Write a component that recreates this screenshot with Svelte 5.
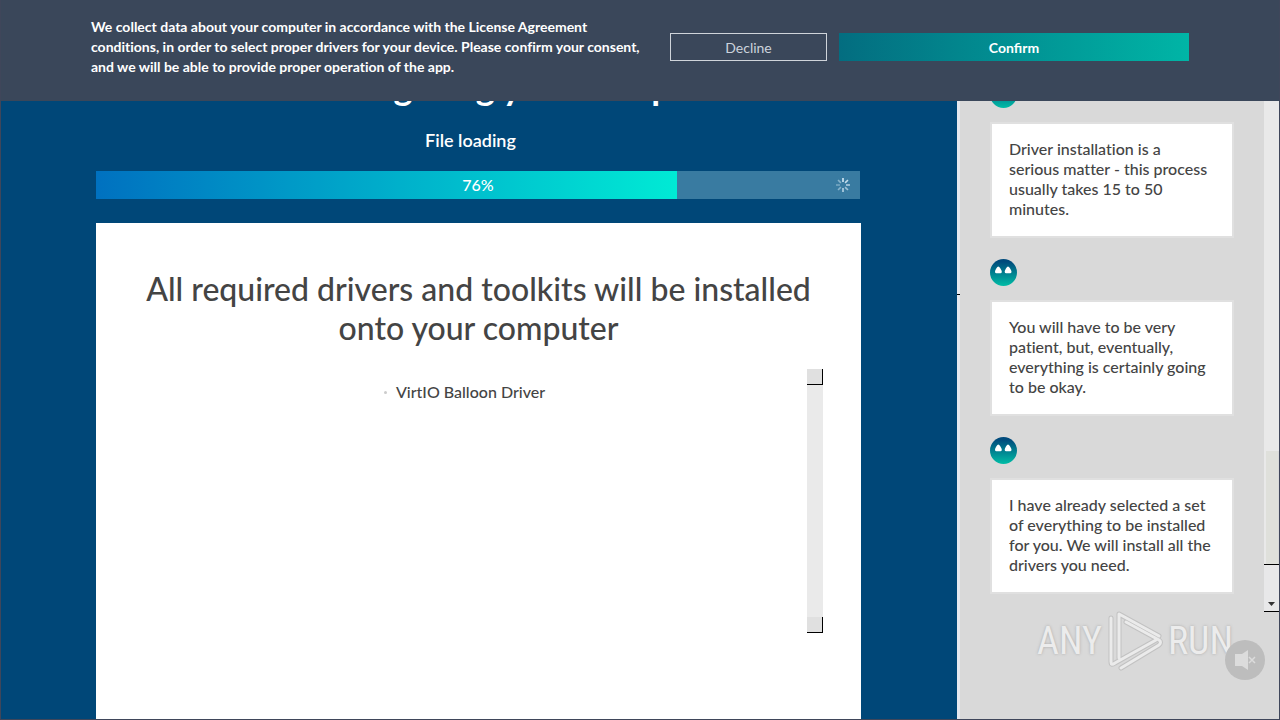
<script lang="ts">
    let drivers = ['VirtIO Balloon Driver'];
    let progress = 76;

    const spokes = [
        { angle: 0, opacity: 1 },
        { angle: 45, opacity: 0.9 },
        { angle: 90, opacity: 0.75 },
        { angle: 135, opacity: 0.65 },
        { angle: 180, opacity: 0.8 },
        { angle: 225, opacity: 0.5 },
        { angle: 270, opacity: 0.4 },
        { angle: 315, opacity: 0.5 }
    ];

    const messages = [
        ['Driver installation is a', 'serious matter - this process', 'usually takes 15 to 50', 'minutes.'],
        ['You will have to be very', 'patient, but, eventually,', 'everything is certainly going', 'to be okay.'],
        ['I have already selected a set', 'of everything to be installed', 'for you. We will install all the', 'drivers you need.']
    ];

    function handleConsent(accepted: boolean) {
        console.log('consent', accepted);
    }
</script>

<div class="window">
    <main>
        <h1>We are configuring your computer</h1>
        <p class="stage" id="stage">File loading</p>
        <div class="progress" role="progressbar" aria-labelledby="stage" aria-valuenow={progress}>
            <div class="bar" style="width: {progress}%"></div>
            <span class="percent">{progress}%</span>
            <svg class="spinner" viewBox="-8 -8 16 16" aria-hidden="true">
                {#each spokes as spoke}
                    <path d="M0 -3V-7" stroke="#d5e9f5" stroke-width="1.6" opacity={spoke.opacity} transform="rotate({spoke.angle})" />
                {/each}
            </svg>
        </div>
        <section class="card">
            <h2>All required drivers and toolkits will be installed<br />onto your computer</h2>
            <div class="drivers">
                <ul>
                    {#each drivers as driver}
                        <li>{driver}</li>
                    {/each}
                </ul>
                <div class="list-scroll">
                    <button type="button" aria-label="Scroll list up"></button>
                    <button type="button" aria-label="Scroll list down"></button>
                </div>
            </div>
        </section>
    </main>

    <aside>
        {#each messages as message}
            <div class="message">
                <svg class="avatar" viewBox="0 0 27 27" aria-hidden="true">
                    <defs>
                        <linearGradient id="face" x1="0" y1="0" x2="0" y2="1">
                            <stop offset="0.1" stop-color="#004b7c" />
                            <stop offset="1" stop-color="#00bda6" />
                        </linearGradient>
                    </defs>
                    <circle cx="13.5" cy="13.5" r="13.5" fill="url(#face)" />
                    <path d="M5 13C5 11 7.300 7.500 8.300 7.500S11.800 11 11.800 13q-.2 1.200-1.400 1.200H6.400Q5.200 14.200 5 13zM14.700 13c0-2 2.300-5.500 3.300-5.500s3.500 3.500 3.500 5.500q-.2 1.200-1.400 1.200h-4q-1.200 0-1.400-1.200z" fill="#fff" />
                </svg>
                <p>{#each message as line}{line}<br />{/each}</p>
            </div>
        {/each}
    </aside>

    <div class="page-scroll">
        <div class="track"></div>
        <div class="thumb"></div>
        <button type="button" aria-label="Scroll down">
            <svg viewBox="0 0 7 4" aria-hidden="true"><path d="M0 0h7L3.500 4z" fill="#333" /></svg>
        </button>
    </div>

    <div class="consent">
        <p>
            We collect data about your computer in accordance with the License Agreement<br />
            conditions, in order to select proper drivers for your device. Please confirm your consent,<br />
            and we will be able to provide proper operation of the app.
        </p>
        <button type="button" class="decline" on:click={() => handleConsent(false)}>Decline</button>
        <button type="button" class="confirm" on:click={() => handleConsent(true)}>Confirm</button>
    </div>

    <div class="watermark">
        <span>ANY</span>
        <svg viewBox="0 0 58 62" aria-hidden="true">
            <g fill="none" stroke-linecap="round" stroke-linejoin="round">
                <path class="edge" d="M5 8v44q0 4 4 1L50 30M13 48V4l40 22M15 58l38-23q3-3 0-5L20 12" />
                <path class="line" d="M5 8v44q0 4 4 1L50 30M13 48V4l40 22M15 58l38-23q3-3 0-5L20 12" />
            </g>
        </svg>
        <span>RUN</span>
    </div>

    <button type="button" class="mute" aria-label="Unmute">
        <svg viewBox="0 0 40 40" aria-hidden="true">
            <path d="M10 14h7l6-4v20l-6-4h-7z" fill="#dcdcdc" />
            <path d="M24 17l6 6M30 17l-6 6" stroke="#dcdcdc" stroke-width="1.500" />
        </svg>
    </button>
</div>

<style>
:global(body) {
    margin: 0;
}
.window {
    position: relative;
    display: flex;
    height: 100vh;
    box-sizing: border-box;
    overflow: hidden;
    border: 1px solid #3f465a;
    border-top: 0;
    background: #d9d9d9;
    color: #444;
    font-family: Lato, "Liberation Sans", sans-serif;
    font-variant-ligatures: none;
}
button {
    font-family: inherit;
    cursor: pointer;
}
h1, h2, p, ul {
    margin: 0;
    padding: 0;
}

main {
    flex: 1;
    display: flex;
    flex-direction: column;
    padding: 64px 96px 0 95px;
    background: #004778;
    color: #fff;
    text-align: center;
}
h1 {
    padding-right: 28px;
    font-size: 36px;
    line-height: 44px;
    font-weight: 700;
}
.stage {
    margin-top: 20px;
    padding-right: 16px;
    font-size: 18px;
    line-height: 24px;
    font-weight: 600;
}
.progress {
    display: flex;
    position: relative;
    height: 28px;
    margin: 19px 1px 24px 0;
    background: #397ba1;
}
.bar {
    background: linear-gradient(90deg, #0071c0, #00ead5);
}
.percent {
    position: absolute;
    inset: 0;
    font-size: 16px;
    line-height: 28px;
    font-weight: 500;
}
.spinner {
    position: absolute;
    right: 9px;
    top: 6px;
    width: 16px;
    height: 16px;
}

.card {
    flex: 1;
    padding: 46px 38px 0;
    background: #fff;
    color: #444;
}
h2 {
    font-size: 32px;
    line-height: 39px;
    font-weight: 500;
    white-space: nowrap;
}
.drivers {
    display: flex;
    height: 264px;
    margin-top: 22px;
}
.drivers ul {
    flex: 1;
    padding: 13px 12px 0 0;
    list-style: none;
}
.drivers li {
    display: flex;
    align-items: center;
    justify-content: center;
    gap: 9px;
    font-size: 16px;
    line-height: 20px;
    font-weight: 500;
}
.drivers li::before {
    content: "";
    width: 3px;
    height: 3px;
    border-radius: 50%;
    background: #ccc;
}
.list-scroll {
    display: flex;
    flex-direction: column;
    justify-content: space-between;
    width: 16px;
    background: #eaeaea;
}
.list-scroll button {
    height: 16px;
    padding: 0;
    border: solid #000;
    border-width: 0 1px 1px 0;
    background: #e0e0e0;
}

aside {
    position: relative;
    width: 244px;
    padding: 81px 30px 0;
    border-left: 3px solid #e6e8ee;
    background: #d9d9d9;
}
aside::before {
    content: "";
    position: absolute;
    left: -3px;
    top: 294px;
    width: 3px;
    height: 1px;
    background: #000;
}
.message {
    display: flex;
    flex-direction: column;
    gap: 14px;
    margin-bottom: 21px;
}
.avatar {
    width: 27px;
    height: 27px;
}
.message p {
    padding: 15px 17px 17px;
    border: 2px solid #e0e0e0;
    background: #fff;
    font-size: 16px;
    line-height: 20px;
    font-weight: 500;
    white-space: nowrap;
}

.page-scroll {
    display: flex;
    flex-direction: column;
    width: 15px;
}
.track {
    flex: 451;
    background: #e9e9e9;
}
.thumb {
    flex: 113;
    margin-right: 1px;
    border-left: 2px solid #e9e9e9;
    background: #dfe0db;
}
.page-scroll button {
    display: flex;
    align-items: flex-end;
    justify-content: center;
    height: 48px;
    margin-bottom: 107px;
    padding: 0 0 5px;
    border: solid #000;
    border-width: 1px 0;
    background: #e8e8e9;
}
.page-scroll svg {
    width: 7px;
    height: 4px;
}

.consent {
    position: absolute;
    inset: 0 -1px auto;
    display: flex;
    align-items: flex-start;
    box-sizing: border-box;
    height: 101px;
    padding: 17px 91px 0;
    background: #3a475a;
    color: #fff;
}
.consent p {
    flex: 1;
    font-size: 14px;
    line-height: 20px;
    font-weight: 700;
    white-space: nowrap;
}
.consent button {
    box-sizing: border-box;
    height: 28px;
    margin-top: 16px;
    padding: 0;
    font-size: 14px;
}
.decline {
    width: 157px;
    border: 1px solid #cfd4da;
    background: none;
    color: #ccd3dc;
    font-weight: 400;
}
.confirm {
    width: 350px;
    margin-left: 12px;
    border: 0;
    background: linear-gradient(90deg, #036d80, #00b5a6);
    color: #fff;
    font-weight: 700;
}

.watermark {
    position: absolute;
    right: 46px;
    bottom: 47px;
    display: flex;
    align-items: center;
    gap: 4px;
    color: #ececec;
    font-family: "Liberation Sans Narrow", "Roboto Condensed", "DejaVu Sans Condensed", sans-serif;
    font-size: 38px;
    line-height: 62px;
    text-shadow: 0 0 3px #a8a8a8;
    pointer-events: none;
}
.watermark svg {
    width: 58px;
    height: 62px;
}
.edge {
    stroke: #c2c2c2;
    stroke-width: 5;
}
.line {
    stroke: #ebebeb;
    stroke-width: 3;
}
.mute {
    position: absolute;
    right: 14px;
    bottom: 39px;
    width: 40px;
    height: 40px;
    padding: 0;
    border: 0;
    border-radius: 50%;
    background: #bdbdbd;
}
.mute svg {
    display: block;
}
</style>
